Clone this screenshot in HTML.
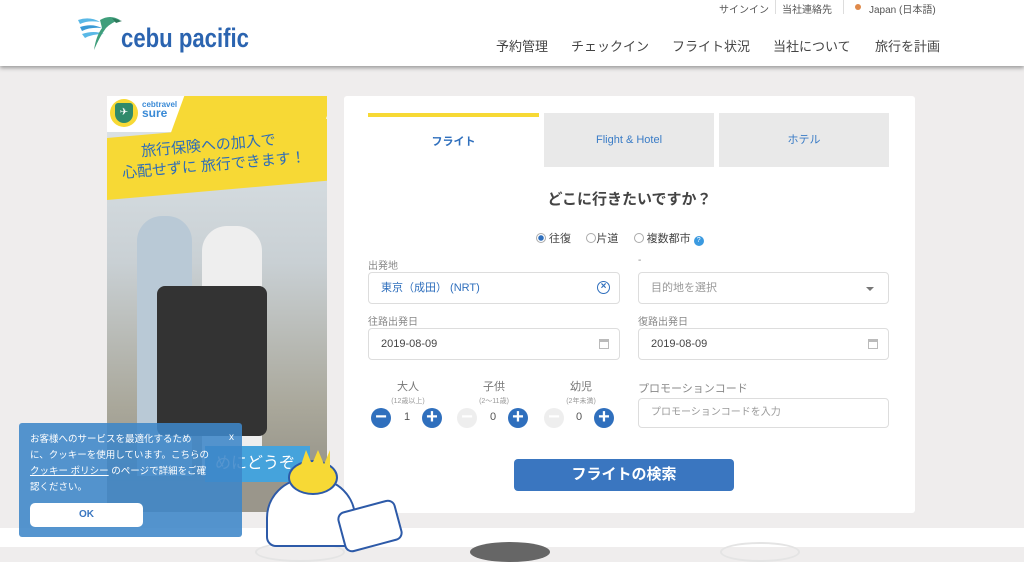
<!DOCTYPE html>
<html><head><meta charset="utf-8"><style>
*{margin:0;padding:0;box-sizing:border-box}
body{width:1024px;height:547px;overflow:hidden;background:#efeded;font-family:"Liberation Sans","Noto Sans CJK JP",sans-serif;position:relative;color:#555}
.hdr{position:absolute;left:0;top:0;width:1024px;height:66px;background:#fff;box-shadow:0 2px 4px #999}
.abs{position:absolute}
.top{font-size:10px;color:#555;top:1px}
.nav{font-size:13px;color:#444;top:36px}
.card{left:344px;top:96px;width:571px;height:417px;background:#fff;border-radius:3px}
.tab{top:113px;height:54px;background:#e9e9e9;color:#3a7cc6;font-size:11px;text-align:center;line-height:54px}
.lbl{font-size:10px;color:#888}
.inp{height:32px;border:1px solid #ddd;border-radius:4px;background:#fff;font-size:11px;line-height:30px;padding-left:12px}
.circ{width:20px;height:20px;border-radius:50%;background:#2f6fbd;color:#fff;font-size:20px;line-height:18px;text-align:center;font-weight:bold}
.dis{background:#eee;color:#fff}
.num{font-size:11px;color:#555;top:411px}
</style></head><body>
<div class="hdr"></div>
<svg class="abs" style="left:76px;top:14px" width="52" height="38" viewBox="0 0 52 38">
<path d="M2 6 Q14 2 24 8 Q12 6 4 10Z" fill="#5ab8e6"/>
<path d="M4 13 Q16 9 26 14 Q14 13 6 17Z" fill="#3a9ad6"/>
<path d="M6 20 Q18 16 28 20 Q16 20 9 24Z" fill="#5ab8e6"/>
<path d="M24 6 Q34 0 44 6 Q36 8 30 14 Q24 22 18 36 Q20 22 26 14Z" fill="#3f9e7b"/>
<path d="M36 4 L46 7 L40 9Z" fill="#2d7a5c"/>
</svg>
<div class="abs" style="left:121px;top:23px;font-size:27px;font-family:'Liberation Sans Narrow','Liberation Sans',sans-serif;font-weight:bold;color:#2b64b0;transform:scaleX(0.82);transform-origin:0 0;white-space:nowrap">cebu pacific</div>
<div class="abs top" style="left:719px">サインイン</div>
<div class="abs" style="left:775px;top:0;width:1px;height:14px;background:#ddd"></div>
<div class="abs top" style="left:782px">当社連絡先</div>
<div class="abs" style="left:843px;top:0;width:1px;height:14px;background:#ddd"></div>
<div class="abs" style="left:855px;top:4px;width:6px;height:6px;border-radius:50%;background:#e08a4a"></div>
<div class="abs top" style="left:869px">Japan (日本語)</div>
<div class="abs nav" style="left:496px">予約管理</div>
<div class="abs nav" style="left:571px">チェックイン</div>
<div class="abs nav" style="left:672px">フライト状況</div>
<div class="abs nav" style="left:773px">当社について</div>
<div class="abs nav" style="left:875px">旅行を計画</div>

<div class="abs" style="left:107px;top:96px;width:220px;height:416px;background:linear-gradient(#dfe6ea,#c9d0d4 40%,#a9a79a 75%,#8d8a80);overflow:hidden">
<div class="abs" style="left:0;top:0;width:220px;height:36px;background:#fff"></div>
<div class="abs" style="left:70px;top:0;width:150px;height:40px;background:#f7d935;transform:skewX(-20deg)"></div>
<div class="abs" style="left:0;top:42px;width:220px;height:62px;background:#f7d935;transform:skewY(-5deg);transform-origin:0 0"></div>
<div class="abs" style="left:3px;top:3px;width:28px;height:28px;border-radius:50%;background:#f7d935"></div>
<div class="abs" style="left:8px;top:7px;width:18px;height:20px;background:#2f8a6a;border-radius:3px 3px 9px 9px;color:#fff;font-size:10px;text-align:center;line-height:20px">✈</div>
<div class="abs" style="left:35px;top:4px;font-size:8px;color:#3a8ad6;font-weight:bold;line-height:9px">cebtravel<br><span style="font-size:12px">sure</span></div>
<div class="abs" style="left:14px;top:40px;font-size:15px;color:#2e6db8;line-height:20px;transform:rotate(-5deg);white-space:nowrap">&nbsp;&nbsp;&nbsp;&nbsp;&nbsp;旅行保険への加入で<br>心配せずに 旅行できます！</div>
<div class="abs" style="left:30px;top:120px;width:55px;height:260px;background:#b9c9d6;border-radius:25px 25px 0 0"></div>
<div class="abs" style="left:95px;top:130px;width:60px;height:250px;background:#eee;border-radius:25px 25px 0 0"></div>
<div class="abs" style="left:50px;top:190px;width:110px;height:150px;background:#333;border-radius:8px"></div>
<div class="abs" style="left:0;top:385px;width:220px;height:31px;background:#9a968b"></div>
</div>
<div class="abs" style="left:205px;top:446px;width:105px;height:36px;background:#45a3dc;color:#fff;font-size:16px;line-height:36px;padding-left:10px">めにどうぞ</div>

<div class="abs card"></div>
<div class="abs" style="left:368px;top:113px;width:171px;height:4px;background:#f7d935"></div>
<div class="abs" style="left:368px;top:117px;width:171px;height:50px;color:#2f6fbd;font-size:11px;text-align:center;line-height:50px;font-weight:bold">フライト</div>
<div class="abs tab" style="left:544px;width:170px">Flight &amp; Hotel</div>
<div class="abs tab" style="left:719px;width:170px">ホテル</div>
<div class="abs" style="left:344px;top:188px;width:571px;text-align:center;font-size:15px;font-weight:bold;color:#444">どこに行きたいですか？</div>
<div class="abs" style="left:536px;top:230px;font-size:11px;color:#444;white-space:nowrap">
<span style="display:inline-block;width:10px;height:10px;border:1px solid #aaa;border-radius:50%;vertical-align:-1px;background:radial-gradient(#2f6fbd 2.5px,#fff 3px)"></span> 往復 &nbsp;&nbsp;&nbsp;
<span style="display:inline-block;width:10px;height:10px;border:1px solid #aaa;border-radius:50%;vertical-align:-1px"></span>片道 &nbsp;&nbsp;&nbsp;
<span style="display:inline-block;width:10px;height:10px;border:1px solid #aaa;border-radius:50%;vertical-align:-1px"></span> 複数都市 <span style="display:inline-block;width:10px;height:10px;border-radius:50%;background:#3b9ae0;color:#fff;font-size:7px;text-align:center;line-height:10px;vertical-align:0">?</span></div>
<div class="abs lbl" style="left:368px;top:257px">出発地</div>
<div class="abs lbl" style="left:638px;top:255px">-</div>
<div class="abs inp" style="left:368px;top:272px;width:252px;color:#2f6fbd">東京（成田） (NRT)</div>
<div class="abs" style="left:597px;top:281px;width:13px;height:13px;border:1.5px solid #2f6fbd;border-radius:50%;color:#2f6fbd;font-size:10px;line-height:10px;text-align:center;font-weight:bold">×</div>
<div class="abs inp" style="left:638px;top:272px;width:251px;color:#999">目的地を選択</div>
<div class="abs" style="left:866px;top:287px;border:4px solid transparent;border-top:4px solid #777"></div>
<div class="abs lbl" style="left:368px;top:313px">往路出発日</div>
<div class="abs lbl" style="left:638px;top:313px">復路出発日</div>
<div class="abs inp" style="left:368px;top:328px;width:252px;color:#444">2019-08-09</div>
<div class="abs inp" style="left:638px;top:328px;width:251px;color:#444">2019-08-09</div>
<div class="abs" style="left:599px;top:339px;width:10px;height:10px;border:1px solid #bbb;border-top:3px solid #bbb"></div>
<div class="abs" style="left:868px;top:339px;width:10px;height:10px;border:1px solid #bbb;border-top:3px solid #bbb"></div>

<div class="abs" style="left:381px;top:378px;width:54px;text-align:center;font-size:11px;color:#777">大人<div style="font-size:7px;color:#999;margin-top:2px">(12歳以上)</div></div>
<div class="abs" style="left:467px;top:378px;width:54px;text-align:center;font-size:11px;color:#777">子供<div style="font-size:7px;color:#999;margin-top:2px">(2〜11歳)</div></div>
<div class="abs" style="left:554px;top:378px;width:54px;text-align:center;font-size:11px;color:#777">幼児<div style="font-size:7px;color:#999;margin-top:2px">(2年未満)</div></div>
<div class="abs circ" style="left:371px;top:408px">−</div><div class="abs num" style="left:404px">1</div><div class="abs circ" style="left:422px;top:408px">+</div>
<div class="abs circ dis" style="left:457px;top:408px">−</div><div class="abs num" style="left:490px">0</div><div class="abs circ" style="left:508px;top:408px">+</div>
<div class="abs circ dis" style="left:544px;top:408px">−</div><div class="abs num" style="left:576px">0</div><div class="abs circ" style="left:594px;top:408px">+</div>
<div class="abs lbl" style="left:638px;top:380px;font-size:11px">プロモーションコード</div>
<div class="abs inp" style="left:638px;top:398px;width:251px;height:30px;color:#999;font-size:10px;line-height:28px">プロモーションコードを入力</div>
<div class="abs" style="left:514px;top:459px;width:220px;height:32px;background:#3a76c0;border-radius:4px;color:#fff;font-size:15px;font-weight:bold;text-align:center;line-height:32px">フライトの検索</div>

<div class="abs" style="left:0;top:528px;width:1024px;height:19px;background:#fff"></div>
<div class="abs" style="left:255px;top:542px;width:90px;height:20px;border-radius:50%;border:2px solid #e4e4e4"></div>
<div class="abs" style="left:470px;top:542px;width:80px;height:20px;border-radius:50%;background:#666"></div>
<div class="abs" style="left:720px;top:542px;width:80px;height:20px;border-radius:50%;border:2px solid #e4e4e4"></div>

<div class="abs" style="left:266px;top:478px;width:90px;height:69px;background:#fff;border:2px solid #2d5aa8;border-radius:40px 40px 10px 10px"></div>
<div class="abs" style="left:288px;top:460px;width:50px;height:35px;background:#f7d935;border:2px solid #2d5aa8;border-radius:50%"></div>
<div class="abs" style="left:300px;top:450px;width:30px;height:18px;background:#f7d935;clip-path:polygon(0 100%,20% 0,40% 80%,60% 0,80% 80%,100% 0,100% 100%)"></div>
<div class="abs" style="left:340px;top:505px;width:60px;height:42px;background:#fff;border:2px solid #2d5aa8;border-radius:8px;transform:rotate(-15deg)"></div>

<div class="abs" style="left:19px;top:423px;width:223px;height:114px;background:rgba(62,134,200,0.88);border-radius:3px;color:#fff;font-size:9.5px;line-height:16px;padding:9px 10px 0 11px">
<div style="position:absolute;right:8px;top:7px;font-size:10px">x</div>
お客様へのサービスを最適化するため<br>に、クッキーを使用しています。こちらの<br><u>クッキー ポリシー</u> のページで詳細をご確<br>認ください。
<div style="position:absolute;left:11px;top:80px;width:113px;height:24px;background:#fff;border-radius:5px;color:#3a76c0;font-weight:bold;text-align:center;line-height:24px;font-size:10px">OK</div>
</div>
</body></html>
